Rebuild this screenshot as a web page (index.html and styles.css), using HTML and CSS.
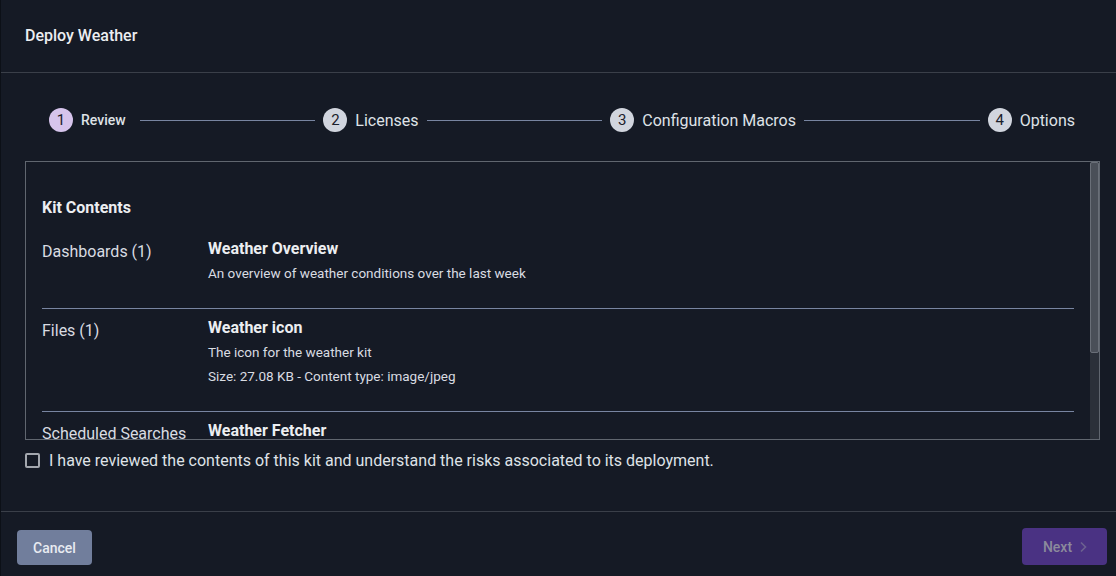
FILE: index.html
```html
<!DOCTYPE html>
<html lang="en">
<head>
<meta charset="utf-8">
<title>Deploy Weather</title>
<link rel="stylesheet" href="styles.css">
</head>
<body>
<div class="dialog">
  <header class="dlg-header">
    <h1 class="dlg-title">Deploy Weather</h1>
  </header>
  <main class="dlg-body">
    <ol class="stepper">
      <li class="step active"><span class="step-num">1</span><span class="step-label">Review</span></li>
      <li class="step-line"></li>
      <li class="step"><span class="step-num">2</span><span class="step-label">Licenses</span></li>
      <li class="step-line"></li>
      <li class="step"><span class="step-num">3</span><span class="step-label">Configuration Macros</span></li>
      <li class="step-line"></li>
      <li class="step"><span class="step-num">4</span><span class="step-label">Options</span></li>
    </ol>
    <section class="contents">
      <div class="contents-inner">
        <h2 class="contents-title">Kit Contents</h2>
        <div class="kit-row">
          <div class="kit-type">Dashboards (1)</div>
          <div class="kit-items">
            <div class="kit-name">Weather Overview</div>
            <div class="kit-desc">An overview of weather conditions over the last week</div>
          </div>
        </div>
        <div class="kit-row">
          <div class="kit-type">Files (1)</div>
          <div class="kit-items">
            <div class="kit-name">Weather icon</div>
            <div class="kit-desc">The icon for the weather kit</div>
            <div class="kit-desc">Size: 27.08 KB - Content type: image/jpeg</div>
          </div>
        </div>
        <div class="kit-row last">
          <div class="kit-type">Scheduled Searches</div>
          <div class="kit-items">
            <div class="kit-name">Weather Fetcher</div>
            <div class="kit-desc">Fetches current weather data every hour</div>
          </div>
        </div>
      </div>
      <div class="scrollbar"><div class="scroll-thumb"></div></div>
    </section>
    <label class="ack">
      <span class="checkbox"></span>
      <span class="ack-text">I have reviewed the contents of this kit and understand the risks associated to its deployment.</span>
    </label>
  </main>
  <footer class="dlg-footer">
    <button class="btn btn-cancel">Cancel</button>
    <button class="btn btn-next" disabled>Next
      <svg class="chev" width="10" height="12" viewBox="0 0 10 12"><path d="M3 1.5 L7.5 6 L3 10.5" fill="none" stroke="currentColor" stroke-width="1.6"/></svg>
    </button>
  </footer>
</div>
</body>
</html>
```

FILE: styles.css
```css
* { box-sizing: border-box; }
html, body { margin: 0; padding: 0; }
body {
  background: #151a25;
  font-family: Roboto, "Noto Sans", "Liberation Sans", sans-serif;
  color: #dfe2e7;
}
.dialog {
  width: 1116px;
  height: 576px;
  display: flex;
  flex-direction: column;
  background: #151a25;
  border-left: 1px solid #0c1017;
}
.dlg-header {
  height: 73px;
  border-bottom: 1px solid #3a3f49;
  display: flex;
  align-items: center;
  padding: 0 0 0 24px;
  flex-shrink: 0;
}
.dlg-title {
  margin: 0 0 2px 0;
  font-size: 16px;
  font-weight: 500;
  color: #eceef1;
}
.dlg-body {
  flex: 1;
  padding: 35px 16px 0 24px;
  display: flex;
  flex-direction: column;
}
.stepper {
  list-style: none;
  margin: 0 0 29px 0;
  padding: 0 25px 0 24px;
  display: flex;
  align-items: center;
  height: 24px;
}
.step {
  display: flex;
  align-items: center;
  gap: 8px;
  flex-shrink: 0;
}
.step-num {
  width: 24px;
  height: 24px;
  border-radius: 50%;
  background: #d1d5de;
  color: #1b202b;
  font-size: 15px;
  display: flex;
  align-items: center;
  justify-content: center;
}
.step.active .step-num { background: #d6c4ec; }
.step-label {
  font-size: 16px;
  color: #dfe2e7;
}
.step.active .step-label {
  font-size: 14px;
  font-weight: 500;
  padding-right: 6px;
}
.step-line {
  flex: 1;
  height: 1px;
  background: #7885a1;
  margin: 0 8px;
}
.contents {
  height: 279px;
  border: 1px solid #60666f;
  display: flex;
  flex-shrink: 0;
}
.contents-inner {
  flex: 1;
  overflow: hidden;
  padding: 34px 16px 0 16px;
}
.scrollbar {
  width: 9px;
  flex-shrink: 0;
  background: #2b3039;
}
.scroll-thumb {
  height: 191px;
  background: #4a4f58;
  border: 1px solid #6a6f78;
  border-radius: 2px;
}
.contents-title {
  margin: 0 0 10px 0;
  font-size: 16px;
  font-weight: 700;
  line-height: 24px;
  color: #eceef1;
}
.kit-row {
  display: flex;
  padding: 7px 0 23px 0;
  border-bottom: 1px solid #7885a1;
}
.kit-row.last { border-bottom: none; }
.kit-type {
  width: 166px;
  flex-shrink: 0;
  font-size: 16px;
  line-height: 24px;
  padding-top: 3px;
  color: #d9dce2;
  white-space: nowrap;
}
.kit-name {
  font-size: 16px;
  font-weight: 700;
  line-height: 24px;
  color: #eceef1;
}
.kit-desc {
  font-size: 13.5px;
  line-height: 24px;
  color: #d9dce2;
}
.ack {
  display: flex;
  align-items: center;
  gap: 9px;
  margin-top: 11px;
}
.checkbox {
  width: 15px;
  height: 15px;
  border: 2px solid #a3a7ae;
  border-radius: 2px;
  flex-shrink: 0;
}
.ack-text {
  font-size: 16px;
  color: #dfe2e7;
}
.dlg-footer {
  height: 65px;
  border-top: 1px solid #3a3f49;
  display: flex;
  align-items: flex-start;
  justify-content: space-between;
  padding: 0 9px 0 16px;
  flex-shrink: 0;
}
.btn {
  font-family: Roboto, "Noto Sans", "Liberation Sans", sans-serif;
  border: none;
  border-radius: 4px;
  font-size: 14px;
  font-weight: 500;
}
.btn-cancel {
  width: 75px;
  height: 35px;
  background: #717e9c;
  color: #e8ebf1;
  margin-top: 18px;
}
.btn-next {
  width: 85px;
  height: 37px;
  background: #4a3283;
  color: #8c8a9c;
  display: flex;
  align-items: center;
  justify-content: center;
  gap: 6px;
  padding: 0 0 0 2px;
  margin-top: 16px;
}
.chev { color: #6c6190; }
```
